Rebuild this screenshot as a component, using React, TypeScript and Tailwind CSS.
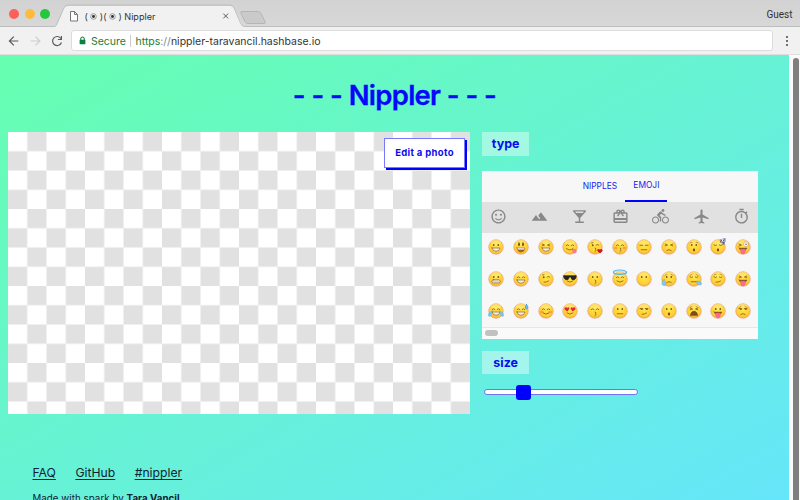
import type { ReactNode } from 'react';
import {
  MdOutlineSentimentSatisfiedAlt,
  MdLandscape,
  MdLocalBar,
  MdCardGiftcard,
  MdDirectionsBike,
  MdLocalAirport,
  MdOutlineTimer,
} from 'react-icons/md';

const INK = '#7a4d14';

type Eyes = 'dot' | 'tall' | 'happy' | 'squint' | 'closed' | 'flat' | 'side' | 'wink' | 'heart' | 'shades' | 'crazy';
type Mouth =
  | 'grin' | 'open' | 'smile' | 'flat' | 'frown' | 'kiss' | 'o' | 'tongue' | 'teeth' | 'none' | 'lick' | 'smirk' | 'wail';
type Extra = 'heart' | 'zzz' | 'halo' | 'tear' | 'tears' | 'sweat' | 'drool' | 'blush' | 'brows' | 'sadbrows';
type Emoji = { eyes: Eyes; mouth: Mouth; extra?: Extra[] };

const ROWS: Emoji[][] = [
  [
    { eyes: 'dot', mouth: 'grin' },
    { eyes: 'tall', mouth: 'open' },
    { eyes: 'squint', mouth: 'grin' },
    { eyes: 'happy', mouth: 'lick' },
    { eyes: 'wink', mouth: 'kiss', extra: ['heart'] },
    { eyes: 'happy', mouth: 'kiss', extra: ['blush'] },
    { eyes: 'flat', mouth: 'flat' },
    { eyes: 'squint', mouth: 'frown' },
    { eyes: 'dot', mouth: 'o', extra: ['brows'] },
    { eyes: 'closed', mouth: 'o', extra: ['zzz'] },
    { eyes: 'crazy', mouth: 'tongue' },
  ],
  [
    { eyes: 'dot', mouth: 'teeth' },
    { eyes: 'happy', mouth: 'grin' },
    { eyes: 'wink', mouth: 'smirk' },
    { eyes: 'shades', mouth: 'smile' },
    { eyes: 'dot', mouth: 'kiss' },
    { eyes: 'happy', mouth: 'smile', extra: ['halo'] },
    { eyes: 'dot', mouth: 'none' },
    { eyes: 'dot', mouth: 'frown', extra: ['tear', 'sadbrows'] },
    { eyes: 'closed', mouth: 'flat', extra: ['drool', 'sadbrows'] },
    { eyes: 'closed', mouth: 'smirk', extra: ['brows'] },
    { eyes: 'squint', mouth: 'tongue' },
  ],
  [
    { eyes: 'happy', mouth: 'grin', extra: ['tears'] },
    { eyes: 'happy', mouth: 'grin', extra: ['sweat'] },
    { eyes: 'happy', mouth: 'smile', extra: ['blush'] },
    { eyes: 'heart', mouth: 'smile' },
    { eyes: 'happy', mouth: 'kiss' },
    { eyes: 'dot', mouth: 'flat' },
    { eyes: 'side', mouth: 'smirk' },
    { eyes: 'dot', mouth: 'o' },
    { eyes: 'squint', mouth: 'wail', extra: ['sadbrows'] },
    { eyes: 'dot', mouth: 'tongue' },
    { eyes: 'side', mouth: 'frown', extra: ['sadbrows'] },
  ],
];

const EYES: Record<Eyes, ReactNode> = {
  dot: <g fill={INK} stroke="none"><ellipse cx="11.5" cy="12" rx="1.6" ry="2.2" /><ellipse cx="20.5" cy="12" rx="1.6" ry="2.2" /></g>,
  tall: <g fill={INK} stroke="none"><ellipse cx="12" cy="10.5" rx="1.8" ry="4" /><ellipse cx="20" cy="10.5" rx="1.8" ry="4" /></g>,
  happy: <path d="M8.5 13q2.7-3.5 5.4 0M18.1 13q2.7-3.5 5.4 0" />,
  squint: <path d="M8.5 10l4.5 2-4.5 1.5M23.5 10l-4.5 2 4.5 1.5" />,
  closed: <path d="M8 12q2.7 2.5 5.4 0M18.6 12q2.7 2.5 5.4 0" />,
  flat: <path d="M8 12.5h5.5M18.5 12.5H24" />,
  side: <g><path d="M8 11h5.5M18.5 11H24" /><path d="M10.5 12.7h2M20.5 12.7h2" strokeWidth="2" /></g>,
  wink: <g><circle cx="11.5" cy="12.5" r="1.8" fill={INK} stroke="none" /><path d="M9 8l3-.5M18 12q3-2.5 5.5 0" /></g>,
  heart: <g fill="#e8213c" stroke="none"><path d="M10.5 17l-5-4c-2-4 3-6 5-3 2-3 5-1 4 2zM21.5 17l-4-5c-1-3 2-5 4-2 2-3 7-1 5 3z" /></g>,
  shades: <path d="M3.5 9.5h25l-1 5q-3 5-8 2l-2-4.5h-3l-2 4.5q-5 3-8-2z" fill="#252525" stroke="#202020" />,
  crazy: <g><path d="M8 10l5 2-5 2" /><circle cx="22" cy="10.5" r="5" fill="#fff" stroke="#d6a65c" /><circle cx="22" cy="10.5" r="1.5" fill="#38516a" stroke="none" /></g>,
};

const MOUTHS: Record<Mouth, ReactNode> = {
  grin: <path d="M8 18h16q-1 6.5-8 6.5T8 18z" fill="#f6f1df" strokeWidth="1.2" />,
  open: <g><path d="M8 18h16q-1 8-8 8t-8-8z" fill="#a86628" strokeWidth="1" /><path d="M9 18.5h14v2.5H9z" fill="#fff" stroke="none" /></g>,
  smile: <path d="M10 20q6 5 12 0" />,
  flat: <path d="M10.5 21.5h11" />,
  frown: <path d="M11.5 23q4.5-4 9 0" />,
  kiss: <path d="M16 18q4 1 1 3.5 3 1.5-1 3.5" />,
  o: <ellipse cx="16" cy="22" rx="2.3" ry="2.8" fill={INK} stroke="none" />,
  tongue: <g><path d="M8 18h16q-2 5.5-8 5.5T8 18z" fill="#8a5428" strokeWidth=".8" /><path d="M11.5 20h9v5q-1 5-4.5 5t-4.5-5z" fill="#fb6b90" stroke="#e55078" strokeWidth=".8" /></g>,
  teeth: <g><rect x="7.5" y="17.5" width="17" height="6.5" rx="3.2" fill="#f6f3e8" strokeWidth="1.2" /><path d="M8 20.7h16M12 18v6M16 18v6M20 18v6" stroke="#a2977d" strokeWidth=".6" /></g>,
  none: null,
  lick: <g><path d="M9 19q7 6 13 0" /><path d="M21 21l6 0q4 6-1 7t-5-7z" fill="#fc79a7" stroke="#ef5d91" strokeWidth="1" /></g>,
  smirk: <path d="M12 22.5q5 .5 9-2.5" />,
  wail: <path d="M9 24.5q1-8 7-8t7 8z" fill="#834528" />,
};

const EXTRAS: Record<Extra, ReactNode> = {
  heart: <path d="M26 29l-5-5c-2-4 3-5.5 5-2.5 2-3 6-1 5 2.5z" fill="#d90c2b" stroke="none" />,
  zzz: <g stroke="#3f489f" strokeWidth="1.6"><path d="M20 2h4l-4 4h4M26 0h5l-5 4h5M25 7h4l-4 3h4" /></g>,
  halo: <g><ellipse cx="16" cy="2.5" rx="13" ry="4" stroke="#59b5e8" strokeWidth="2.8" /><path d="M5 1q10-4 20 0" stroke="#b7e4fc" /></g>,
  tear: <path d="M6 17q-7 8-3 11 6 3 7-2z" fill="#83cafa" stroke="#479bd2" strokeWidth=".8" />,
  tears: <g fill="#76c7fa" stroke="#4dade9" strokeWidth=".8"><path d="M8 16q-9 4-7 10 6 4 7-10zM24 16q9 4 7 10-6 4-7-10z" /></g>,
  sweat: <path d="M27 3q-5 7 0 9 6-1 0-9z" fill="#6dc0f4" stroke="#3999d6" />,
  drool: <path d="M19 21q11-2 12 4 0 5-6 2z" fill="#82c9ed" stroke="#4996c7" strokeWidth=".8" />,
  blush: <g fill="#f17343" fillOpacity=".5" stroke="none"><ellipse cx="7.5" cy="18" rx="4" ry="2.5" /><ellipse cx="24.5" cy="18" rx="4" ry="2.5" /></g>,
  brows: <path d="M8 8q2-2.5 4-1.5M20 6.500q2-1 4 1.5" strokeWidth="1" />,
  sadbrows: <path d="M8 9l4-2M20 7l4 2" strokeWidth="1" />,
};

function Face({ eyes, mouth, extra = [] }: Emoji) {
  return (
    <svg viewBox="0 0 32 32" className="h-4 w-4 overflow-visible">
      <circle cx="16" cy="16" r="14.6" fill="url(#face)" stroke="#e9a98b" strokeWidth="1.4" />
      <ellipse cx="16" cy="7" rx="10" ry="5" fill="#fff5a0" opacity=".4" />
      <g fill="none" stroke={INK} strokeWidth="1.5" strokeLinecap="round" strokeLinejoin="round">
        {EYES[eyes]}
        {MOUTHS[mouth]}
        {extra.map((name) => <g key={name}>{EXTRAS[name]}</g>)}
      </g>
    </svg>
  );
}

function Browser() {
  return (
    <header className="h-[55px] shrink-0 bg-[#f1f1f1] font-['Inter',sans-serif]">
      <div className="relative flex h-[27px] items-center bg-linear-to-b from-[#d2d2d2] to-[#d8d8d8]">
        <svg viewBox="0 0 800 27" className="absolute inset-0 h-[27px] w-[800px]">
          <path d="M0 26.5H54c2 0 2-1 3-3L64 8q1-3 4-3H230q3 0 4 3l6 15q1 3 4 3.5H800" fill="none" stroke="#bdbdbd" />
          <path d="M55 27q2-1 3-4l6-14q1-3 4-3H230q3 0 4 3l6 14q1 3 4 4z" fill="#f1f1f1" />
          <path d="M242 11.5h16q2 0 3 2l4 8q1 2-1 2h-16q-2 0-3-2l-4-8q-1-2 1-2z" fill="#cacaca" stroke="#b5b5b5" />
          <path d="M70.5 11.5h4l3 3v6.5h-7zM74.5 11.5v3h3" fill="#fff" stroke="#777" />
          <path d="M223.3 13.6l4.8 4.8m0-4.8l-4.8 4.8" fill="none" stroke="#5b5b5b" />
        </svg>
        <div className="flex gap-[5.5px] pl-[9px]">
          <span className="size-[10px] rounded-full bg-[#fb605b]" />
          <span className="size-[10px] rounded-full bg-[#fdbc40]" />
          <span className="size-[10px] rounded-full bg-[#27c63f]" />
        </div>
        <div className="relative ml-[34.5px] mt-[6px] flex items-center text-[9.1px] leading-none text-[#333]">
          <span>(</span>
          <Eye />
          <span>)(</span>
          <Eye />
          <span>)</span>
          <span className="ml-[2.5px]">Nippler</span>
        </div>
        <span className="relative ml-auto pt-px pr-[7.5px] font-['Roboto',sans-serif] text-[10px] text-[#333]">Guest</span>
      </div>
      <div className="flex h-7 items-center border-b border-[#dedede]">
        <svg viewBox="0 0 72 28" className="h-7 w-[71px] shrink-0" fill="none" strokeWidth="1.2">
          <path d="M18.5 14H9.5m4.5-4.5L9.5 14l4.5 4.5" stroke="#5a5a5a" />
          <path d="M31 14h9.5M36 9.5l4.5 4.5-4.5 4.5" stroke="#cdcdcd" />
          <path d="M61.8 11.5A4.6 4.6 0 1 0 62.3 15.5M62.3 9v3.5h-3.6" stroke="#5a5a5a" />
        </svg>
        <div className="flex h-[21px] w-[702px] items-center rounded-[3px] border border-[#dcdcdc] bg-white text-[10.5px]">
          <svg viewBox="0 0 8 10" className="ml-[6.5px] h-[9px] w-[7px]">
            <path d="M2 5V3a2 2 0 0 1 4 0v2" fill="none" stroke="#0b8043" strokeWidth="1.2" />
            <rect x=".7" y="4" width="6.6" height="5.3" rx=".5" fill="#0b8043" />
          </svg>
          <span className="ml-[5.5px] w-[39px] pt-[2px] text-[#188038]">Secure</span>
          <span className="h-[12px] w-px bg-[#ccc]" />
          <span className="ml-[4.5px] pt-[2px] whitespace-nowrap text-[#333]">
            <span className="text-[#188038]">https</span><span className="text-[#888]">://</span>nippler-taravancil.hashbase.io
          </span>
        </div>
        <div className="ml-[12.5px] flex flex-col gap-[2px]">
          <i className="size-[2px] rounded-full bg-[#444]" />
          <i className="size-[2px] rounded-full bg-[#444]" />
          <i className="size-[2px] rounded-full bg-[#444]" />
        </div>
      </div>
    </header>
  );
}

function Eye() {
  return (
    <svg viewBox="0 0 8 8" className="mx-[2.5px] h-[7px] w-[7px]">
      <circle cx="4" cy="4" r="3.2" fill="none" stroke="#777" strokeWidth=".8" />
      <circle cx="4" cy="4" r="1.7" fill="#333" />
    </svg>
  );
}

function Picker() {
  return (
    <section className="mt-[15px] flex h-[168px] w-[276px] flex-col bg-[#f7f7f7]">
      <div className="flex h-[31px] justify-center gap-[4px] pl-[5px] text-[8.4px] text-[#2020ee]">
        <span className="flex w-[43px] items-center justify-center">NIPPLES</span>
        <span className="flex w-[42px] items-center justify-center border-b-2 border-[#00f]">EMOJI</span>
      </div>
      <div className="flex h-[31px] items-center justify-between bg-[#e1e1e1] px-[8px] pb-[2px] text-[17px] text-[#888]">
        <MdOutlineSentimentSatisfiedAlt />
        <MdLandscape />
        <MdLocalBar />
        <MdCardGiftcard />
        <MdDirectionsBike />
        <MdLocalAirport />
        <MdOutlineTimer />
      </div>
      <div className="flex h-[94px] flex-col gap-[15.7px] pt-[6.7px] pl-[6px]">
        {ROWS.map((row, i) => (
          <div key={i} className="flex h-4 gap-[8.65px]">
            {row.map((face, j) => <Face key={j} {...face} />)}
          </div>
        ))}
      </div>
      <div className="flex h-[12px] items-center border-t border-[#e7e7e7] bg-[#fafafa] pl-[2.5px]">
        <span className="h-[6px] w-[13px] rounded-full bg-[#c1c1c1]" />
      </div>
    </section>
  );
}

/** Empty canvas: the transparency checkerboard with the edit button over its corner. */
function Canvas() {
  return (
    <div className="relative h-[282px] w-[462.5px]">
      <svg className="block h-full w-full bg-white">
        <defs>
          <pattern id="checker" width="38.5" height="38.5" patternUnits="userSpaceOnUse">
            <rect width="38.5" height="38.5" fill="#fff" />
            <rect x="19.25" width="19.25" height="19.25" fill="#e1e1e1" />
            <rect y="19.25" width="19.25" height="19.25" fill="#e1e1e1" />
          </pattern>
        </defs>
        <rect width="100%" height="100%" fill="url(#checker)" />
      </svg>
      <button className="absolute top-[6px] right-[5px] h-[30px] w-[81px] border border-[#7777ff] bg-white pt-px text-[9.5px] font-bold tracking-[0.32px] text-[#0b0bf0] shadow-[2px_2px_0_#00f]">
        Edit a photo
      </button>
    </div>
  );
}

export default function App() {
  return (
    <div className="flex h-[500px] w-[800px] flex-col overflow-hidden">
      <svg className="absolute h-0 w-0">
        <defs>
          <radialGradient id="face" cx=".5" cy=".4" r=".62">
            <stop offset="0" stopColor="#ffe54a" />
            <stop offset=".7" stopColor="#ffd032" />
            <stop offset="1" stopColor="#f5a13a" />
          </radialGradient>
        </defs>
      </svg>
      <Browser />
      <div className="flex h-[445px]">
        <main className="w-[789px] overflow-hidden bg-[linear-gradient(150deg,#66ffb0,#66e6fa)] font-['Inter',sans-serif]">
          <h1 className="mt-[23px] h-[53.5px] text-center text-[27.5px] leading-[34px] font-semibold tracking-[-0.75px] [word-spacing:0.4px] text-[#0707fa] [-webkit-text-stroke:0.3px_#0707fa]">
            - - - Nippler - - -
          </h1>
          <div className="flex pl-[7.5px]">
            <Canvas />
            <div className="ml-[12.4px]">
              <h2 className="flex h-6 w-[46.5px] items-center justify-center bg-white/40 pt-px text-[12.5px] font-bold text-[#0b0bef]">type</h2>
              <Picker />
              <h2 className="mt-[12px] flex h-[23px] w-[46.5px] items-center justify-center bg-white/40 pt-[2px] text-[12.5px] font-bold text-[#0b0bef]">size</h2>
              <div className="mt-[11px] ml-[2px] flex h-[15px] w-[154px] items-center">
                <div className="flex h-[6px] w-full items-center rounded-full border border-[#7373f5] bg-white">
                  <span className="ml-[30.5px] size-[15px] shrink-0 rounded-[3px] bg-[#00f]" />
                </div>
              </div>
            </div>
          </div>
          <footer className="pt-[50.5px] pl-[32.5px] text-[12.2px] text-[#123]">
            <nav className="flex gap-[19.5px] leading-[18px] underline underline-offset-2">
              <span>FAQ</span><span>GitHub</span><span>#nippler</span>
            </nav>
            <p className="mt-[10px] text-[9.7px] leading-[14px] tracking-[0.07px]">
              Made with spark by <b>Tara Vancil</b>
            </p>
          </footer>
        </main>
        <aside className="flex w-[11px] bg-[#fafafa] pt-[3px] pl-[3.5px]">
          <span className="h-[460px] w-[6px] rounded-t-full bg-[#7f7f7f]" />
        </aside>
      </div>
    </div>
  );
}
